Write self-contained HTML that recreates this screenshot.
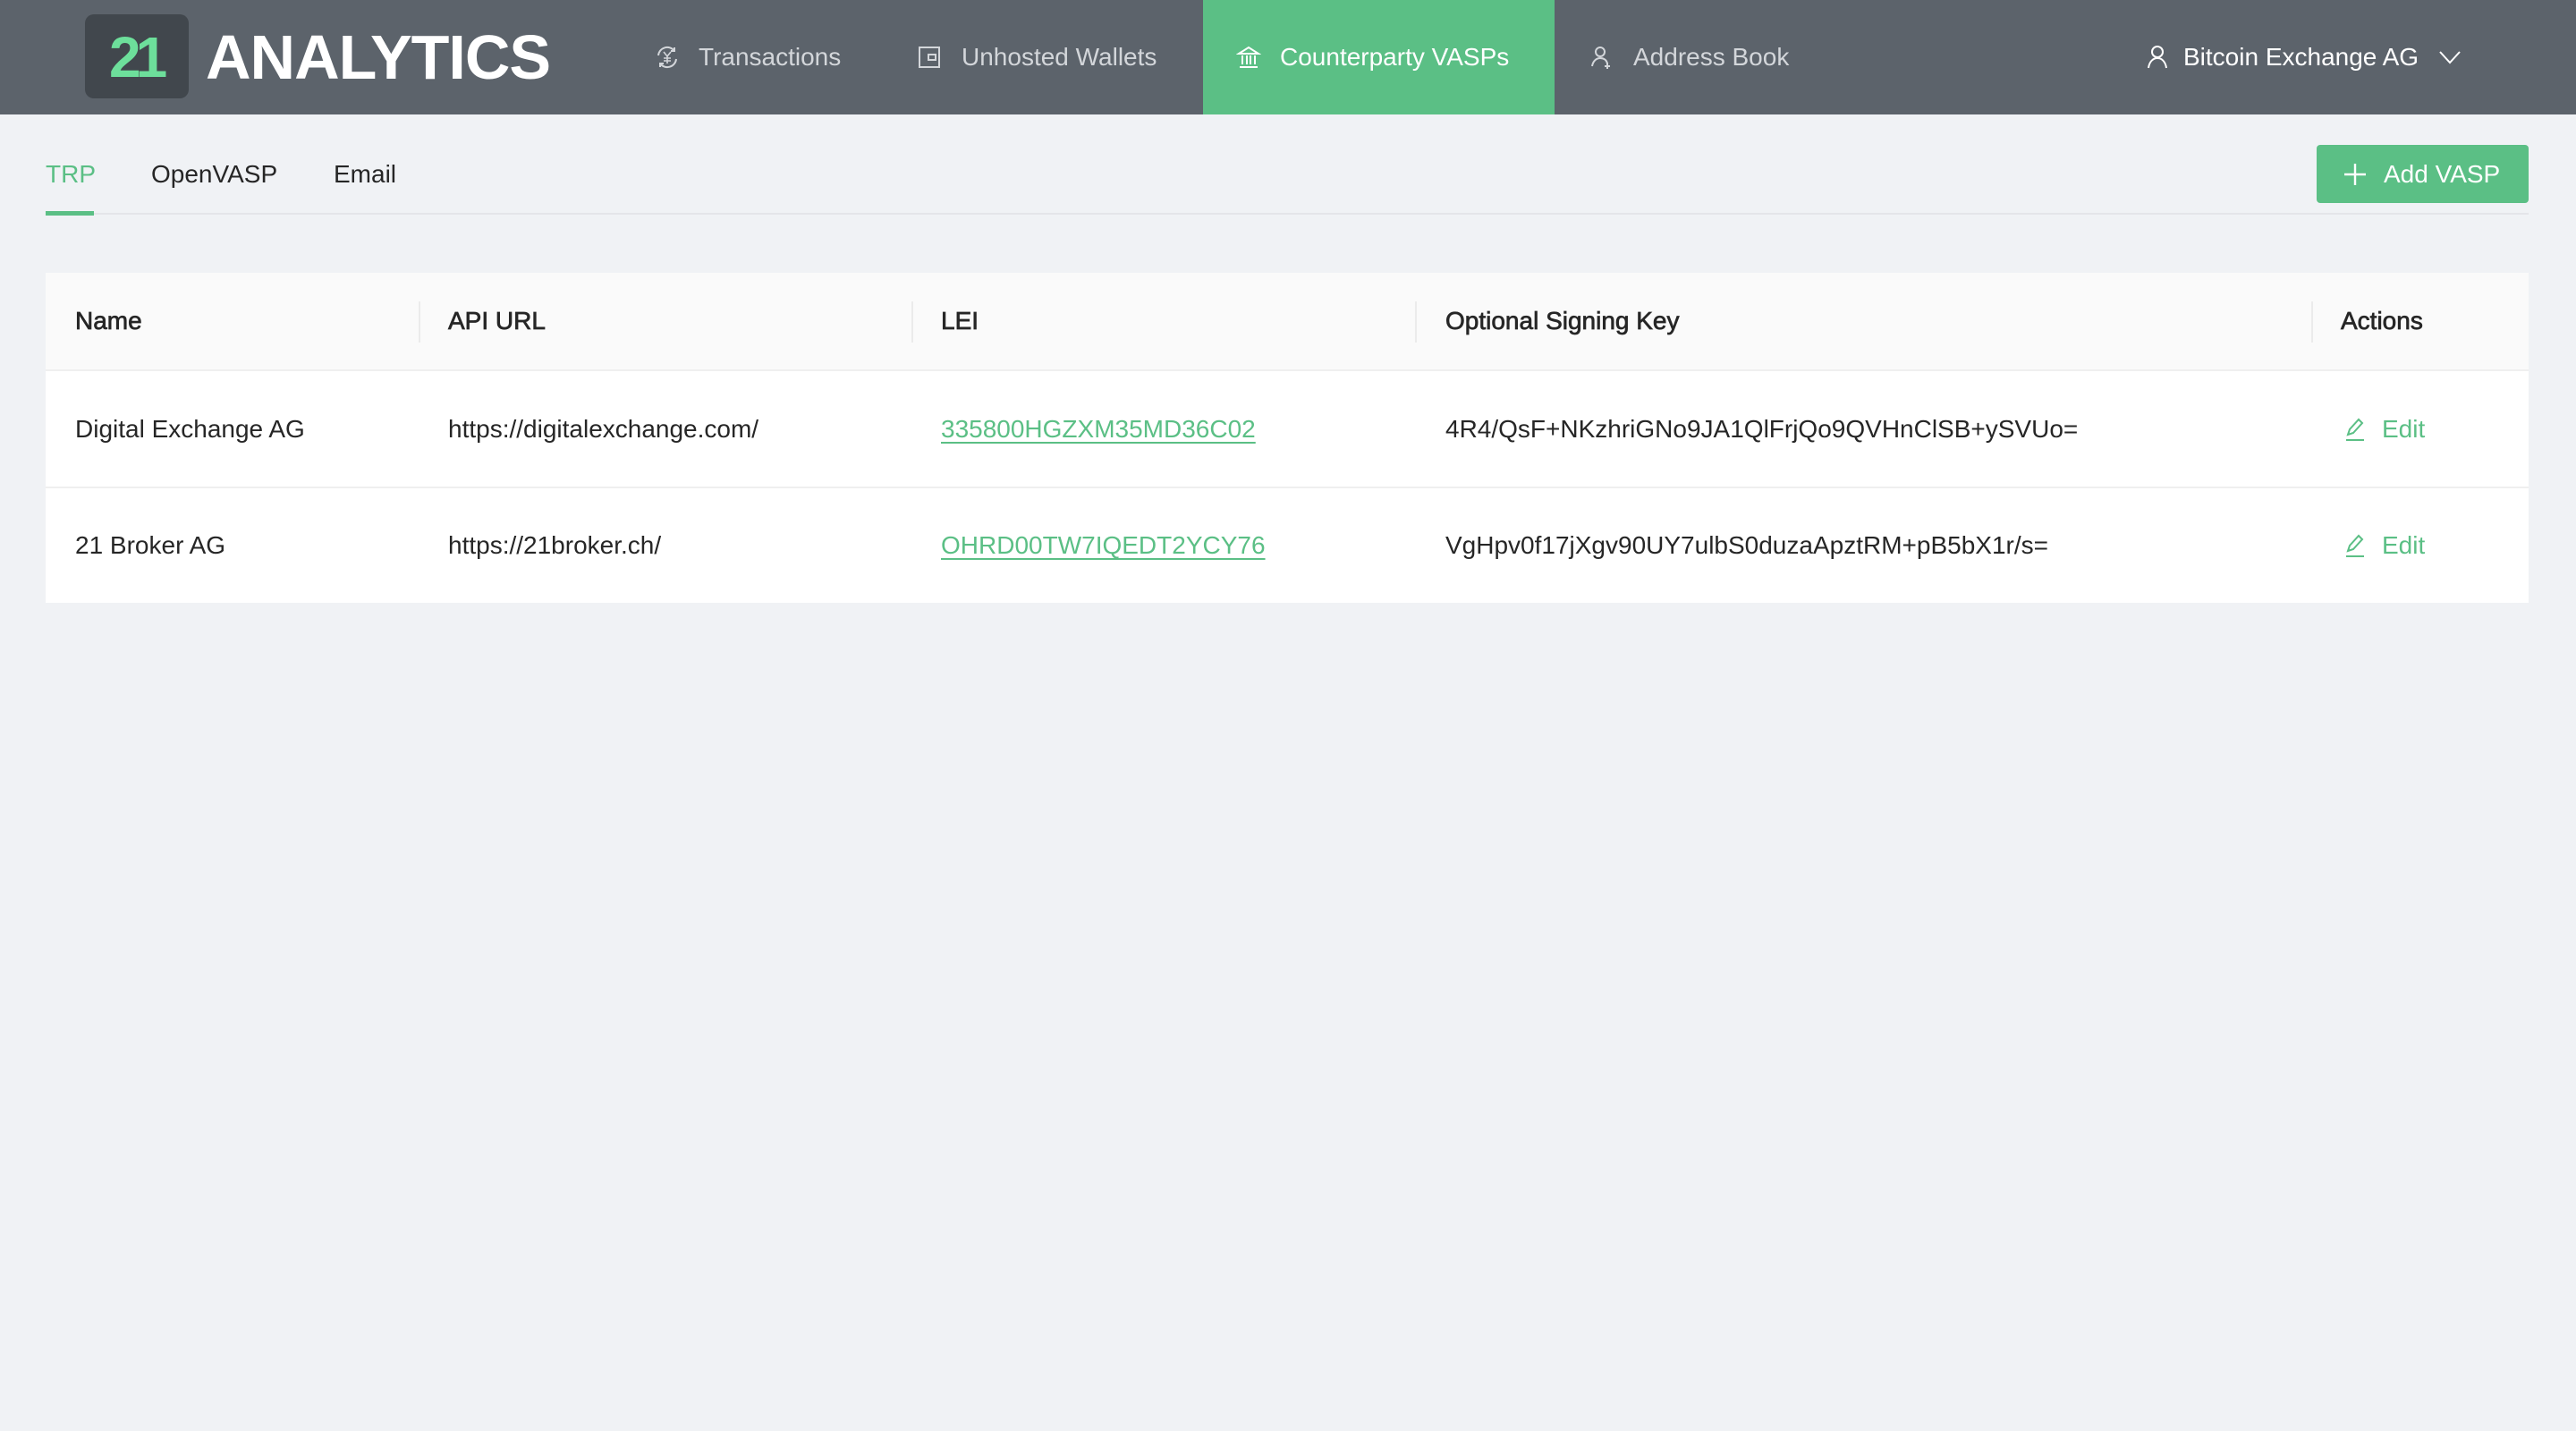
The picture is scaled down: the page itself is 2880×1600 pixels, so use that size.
<!DOCTYPE html>
<html><head><meta charset="utf-8"><style>
*{margin:0;padding:0;box-sizing:border-box}
body{width:2880px;height:1600px;background:#f0f2f5;font-family:"Liberation Sans",sans-serif;position:relative;overflow:hidden;color:#222}
.a{position:absolute;white-space:nowrap}
.hdr{left:0;top:0;width:2880px;height:128px;background:#5c636b}
.nav{font-size:28px;color:#d3d6da;top:48px;line-height:32px}
.ico{position:absolute;top:50px}
.th{font-size:28px;color:#262626;line-height:32px;-webkit-text-stroke:0.7px #262626}
.td{font-size:28px;color:#262626;line-height:32px}
.lnk{color:#5bbf85;text-decoration:underline;text-underline-offset:5px}
.sep{width:2px;height:46px;background:#ebebeb;top:337px}
</style></head><body>
<div class="a hdr"></div>
<div class="a" style="left:95px;top:16px;width:116px;height:94px;background:#41474d;border-radius:10px"></div>
<div class="a" style="left:122px;top:30px;font-size:64px;font-weight:bold;color:#6ddf9b;letter-spacing:-6px;line-height:68px">21</div>
<div class="a" style="left:230px;top:26px;font-size:70px;font-weight:bold;color:#fff;line-height:76px;letter-spacing:-1px">ANALYTICS</div>

<svg class="ico" style="left:732px" width="28" height="28" viewBox="0 0 28 28" fill="none" stroke="#d3d6da" stroke-width="2"><path d="M4 12A10 10 0 0 1 22 7M24 16A10 10 0 0 1 6 21"/><path d="M22 3v4h-4M6 25v-4h4"/><path d="M10 8l4 5 4-5M14 13v8M10 15h8M10 18h8" stroke-width="1.6"/></svg>
<div class="a nav" style="left:781px">Transactions</div>
<svg class="ico" style="left:1025px" width="28" height="28" viewBox="0 0 28 28" fill="none" stroke="#d3d6da" stroke-width="2"><rect x="3" y="3" width="22" height="22"/><rect x="13" y="11" width="8" height="6"/></svg>
<div class="a nav" style="left:1075px">Unhosted Wallets</div>
<div class="a" style="left:1345px;top:0;width:393px;height:128px;background:#5bbf85"></div>
<svg class="ico" style="left:1382px" width="28" height="28" viewBox="0 0 28 28" fill="none" stroke="#fff" stroke-width="2"><path d="M3 10L14 3l11 7zM4 25h20M7 12v10M12 12v10M16 12v10M21 12v10"/></svg>
<div class="a nav" style="left:1431px;color:#fff">Counterparty VASPs</div>
<svg class="ico" style="left:1777px" width="28" height="28" viewBox="0 0 28 28" fill="none" stroke="#d3d6da" stroke-width="2"><circle cx="12" cy="8" r="5"/><path d="M3 24c1-6 5-9 9-9s7 2 8 6M20 20v7M17 24h6"/></svg>
<div class="a nav" style="left:1826px">Address Book</div>
<svg class="ico" style="left:2398px" width="28" height="28" viewBox="0 0 28 28" fill="none" stroke="#fff" stroke-width="2"><circle cx="14" cy="8" r="6"/><path d="M4 26c1-7 5-11 10-11s9 4 10 11"/></svg>
<div class="a nav" style="left:2441px;color:#fff">Bitcoin Exchange AG</div>
<svg class="ico" style="left:2726px;top:52px" width="26" height="24" viewBox="0 0 26 24" fill="none" stroke="#fff" stroke-width="2"><path d="M2 6l11 12 11-12"/></svg>

<div class="a td" style="left:51px;top:179px;color:#5bbf85">TRP</div>
<div class="a td" style="left:169px;top:179px">OpenVASP</div>
<div class="a td" style="left:373px;top:179px">Email</div>
<div class="a" style="left:51px;top:238px;width:2776px;height:2px;background:#e4e5e9"></div>
<div class="a" style="left:51px;top:236px;width:54px;height:5px;background:#5bbf85"></div>

<div class="a" style="left:2590px;top:162px;width:237px;height:65px;background:#5bbf85;border-radius:4px"></div>
<svg class="a" style="left:2620px;top:182px" width="26" height="26" viewBox="0 0 26 26" stroke="#fff" stroke-width="2.4"><path d="M13 1v24M1 13h24"/></svg>
<div class="a td" style="left:2665px;top:179px;color:#fff">Add VASP</div>

<div class="a" style="left:51px;top:305px;width:2776px;height:369px;background:#fff"></div>
<div class="a" style="left:51px;top:305px;width:2776px;height:110px;background:#fafafa;border-bottom:2px solid #efefef"></div>
<div class="a" style="left:51px;top:544px;width:2776px;height:2px;background:#efefef"></div>
<div class="a sep" style="left:468px"></div>
<div class="a sep" style="left:1019px"></div>
<div class="a sep" style="left:1582px"></div>
<div class="a sep" style="left:2584px"></div>
<div class="a th" style="left:84px;top:343px">Name</div>
<div class="a th" style="left:501px;top:343px">API URL</div>
<div class="a th" style="left:1052px;top:343px">LEI</div>
<div class="a th" style="left:1616px;top:343px">Optional Signing Key</div>
<div class="a th" style="left:2617px;top:343px">Actions</div>

<div class="a td" style="left:84px;top:464px">Digital Exchange AG</div>
<div class="a td" style="left:501px;top:464px">https://digitalexchange.com/</div>
<div class="a td lnk" style="left:1052px;top:464px">335800HGZXM35MD36C02</div>
<div class="a td" style="left:1616px;top:464px">4R4/QsF+NKzhriGNo9JA1QlFrjQo9QVHnClSB+ySVUo=</div>
<svg class="a" style="left:2620px;top:466px" width="26" height="28" viewBox="0 0 26 28" fill="none" stroke="#5bbf85" stroke-width="2"><path d="M5 20l2-6L17 3l4 4-10 11zM3 26h20"/></svg>
<div class="a td" style="left:2663px;top:464px;color:#5bbf85">Edit</div>

<div class="a td" style="left:84px;top:594px">21 Broker AG</div>
<div class="a td" style="left:501px;top:594px">https://21broker.ch/</div>
<div class="a td lnk" style="left:1052px;top:594px">OHRD00TW7IQEDT2YCY76</div>
<div class="a td" style="left:1616px;top:594px">VgHpv0f17jXgv90UY7ulbS0duzaApztRM+pB5bX1r/s=</div>
<svg class="a" style="left:2620px;top:596px" width="26" height="28" viewBox="0 0 26 28" fill="none" stroke="#5bbf85" stroke-width="2"><path d="M5 20l2-6L17 3l4 4-10 11zM3 26h20"/></svg>
<div class="a td" style="left:2663px;top:594px;color:#5bbf85">Edit</div>
</body></html>
